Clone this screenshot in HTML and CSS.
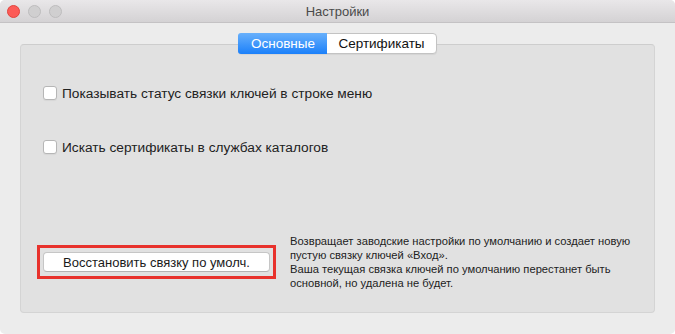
FILE: index.html
```html
<!DOCTYPE html>
<html lang="ru">
<head>
    <meta charset="UTF-8">
    <meta name="viewport" content="width=device-width, initial-scale=1.0">
    <title>Настройки</title>
    <link rel="stylesheet" href="styles.css">
</head>
<body>
    <div class="window">
        <div class="titlebar">
            <div class="lights">
                <span class="light close"></span>
                <span class="light"></span>
                <span class="light"></span>
            </div>
            <div class="title">Настройки</div>
        </div>

        <div class="tabs">
            <span class="tab active">Основные</span>
            <span class="tab">Сертификаты</span>
        </div>

        <div class="panel">
            <label class="check first">
                <span class="box"></span>
                Показывать статус связки ключей в строке меню
            </label>
            <label class="check">
                <span class="box"></span>
                Искать сертификаты в службах каталогов
            </label>

            <div class="reset">
                <div class="highlight">
                    <button class="btn">Восстановить связку по умолч.</button>
                </div>
                <p class="note">Возвращает заводские настройки по умолчанию и создает новую пустую связку ключей «Вход».<br>
                Ваша текущая связка ключей по умолчанию перестанет быть основной, но удалена не будет.</p>
            </div>
        </div>
    </div>
</body>
</html>
```

FILE: styles.css
```css
body {
    margin: 0;
    background: white;
    font-family: "Liberation Sans", Arial, sans-serif;
    color: #1d1d1d;
}

.window {
    width: 675px;
    height: 334px;
    background: #ececec;
    border-radius: 5px;
    overflow: hidden;
    display: flex;
    flex-direction: column;
}

.titlebar {
    height: 22px;
    flex: none;
    background: linear-gradient(#e9e7e9, #d4d2d4);
    border-bottom: 1px solid #c4c2c4;
    display: flex;
    align-items: center;
    position: relative;
}

.lights {
    display: flex;
    gap: 8px;
    padding-left: 7px;
}

.light {
    width: 11px;
    height: 11px;
    border-radius: 50%;
    background: #d0cfd0;
    border: 0.5px solid #bdbcbd;
}
.light.close {
    background: #fc5b57;
    border-color: #e0443e;
}

.title {
    position: absolute;
    left: 0;
    right: 0;
    text-align: center;
    font-size: 13px;
    color: #4a4a4a;
    pointer-events: none;
}

.tabs {
    align-self: center;
    margin-top: 10px;
    display: flex;
    height: 19px;
    border: 1px solid #c3c3c3;
    border-radius: 4px;
    background: white;
    box-shadow: 0 1px 1px rgba(0, 0, 0, 0.06);
    position: relative;
    z-index: 1;
    font-size: 13.5px;
}
.tab {
    display: flex;
    align-items: center;
    justify-content: center;
    width: 109px;
    color: #111;
}
.tab.active {
    width: 88px;
    color: white;
    background: linear-gradient(#68b0fb, #1b80fa);
    border-radius: 3px 0 0 3px;
    margin: -1px 0 -1px -1px;
    padding: 1px 0 1px 1px;
}

.panel {
    margin: -10px 20px 0;
    height: 267px;
    background: #e1e1e1;
    border: 1px solid #d4d4d4;
    border-top-color: #cdcdcd;
    border-radius: 4px;
    display: flex;
    flex-direction: column;
    padding: 0 0 0 16px;
}

.check {
    display: flex;
    align-items: center;
    gap: 5px;
    font-size: 13.7px;
    height: 18px;
    margin-left: 6px;
    color: #222;
}
.check.first {
    margin-top: 39px;
    margin-bottom: 36px;
}

.box {
    width: 12px;
    height: 12px;
    background: white;
    border: 1px solid #b6b6b6;
    border-radius: 3px;
    box-shadow: 0 1px 1px rgba(0, 0, 0, 0.05);
}

.reset {
    margin-top: auto;
    margin-bottom: 22px;
    display: flex;
    align-items: center;
    gap: 14px;
}

.highlight {
    border: 3px solid #e8322c;
    padding: 4px 3px;
}

.btn {
    display: block;
    width: 227px;
    height: 20px;
    background: white;
    border: 1px solid #c6c6c6;
    border-bottom-color: #b3b3b3;
    border-radius: 4px;
    font-family: inherit;
    font-size: 13px;
    color: #1a1a1a;
    padding: 0;
}

.note {
    margin: 0;
    width: 350px;
    font-size: 11.2px;
    line-height: 14px;
    color: #222;
}
```
